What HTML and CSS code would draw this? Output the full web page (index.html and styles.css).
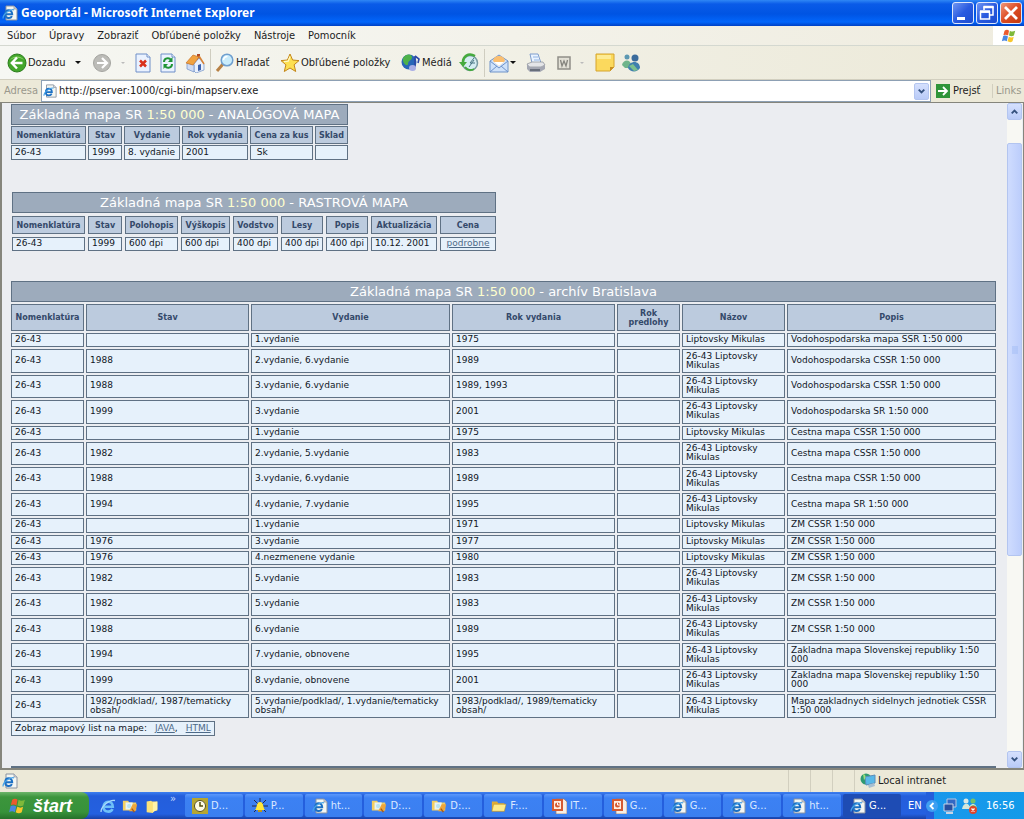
FILE: index.html
```html
<!DOCTYPE html>
<html lang="sk">
<head>
<meta charset="utf-8">
<title>Geoportál</title>
<link rel="stylesheet" href="styles.css">
</head>
<body>
<svg class="sprite" aria-hidden="true">
  <symbol id="ie" viewBox="0 0 16 16"><path d="M4 1h8l3 3v11H4z" fill="#f4f6f2" stroke="#8a93a0"/><path d="M12 1v3h3" fill="#ccd3dc" stroke="#8a93a0" stroke-width=".7"/><path d="M3.500 9.300h6.700c0-5.600-7-5.300-7 0 0 4.700 5.400 4.600 6.700 1.800" fill="none" stroke="#1c70c4" stroke-width="2"/><path d="M1 13.500C1 9 8 3.800 12 4.800" fill="none" stroke="#46a3e8" stroke-width="1.200"/></symbol>
  <symbol id="ebig" viewBox="0 0 16 16"><path d="M4 8.800h8.800c0-7-9.300-6.500-9.300 0 0 6 7.500 6 9 2.200" fill="none" stroke="#6fc1f8" stroke-width="2.600"/><path d="M1 14C1 9 9 1 15 2.500" fill="none" stroke="#a7d9fb" stroke-width="1.300"/></symbol>
  <symbol id="folder" viewBox="0 0 18 16"><path d="M1 3h6l1 2h7v9H1z" fill="#e0ad38"/><path d="M3 6h14l-2 8H1z" fill="#fdeb8c" stroke="#b98a1e" stroke-width=".6"/></symbol>
  <symbol id="note" viewBox="0 0 18 16"><path d="M3 3l5-1 1 1h6v10l-4 1-1 2-7-1z" fill="#fbe27a"/><path d="M10 4l5-1v9l-5 3z" fill="#fff3a8"/></symbol>
  <symbol id="foldersearch" viewBox="0 0 18 16"><path d="M1 2h6l1 2h8v9H1z" fill="#f2cf63"/><path d="M4 4h8v8H4z" fill="#e8f4f6"/><circle cx="8" cy="8" r="3" fill="#b9e4f2" stroke="#ecf5f7"/><path d="M12 6h5l-2 8H8z" fill="#eda63c"/><path d="M11 11l3 4" stroke="#a65a18" stroke-width="1.500"/></symbol>
  <symbol id="ppt" viewBox="0 0 16 16"><path d="M5 1h8l3 3v12H5z" fill="#f8efe4" stroke="#9b7968" stroke-width=".7"/><path d="M1 1h11v12H1z" fill="#d65b32"/><path d="M3 3h7v8H3z" fill="#fff0e2"/><circle cx="6.500" cy="7" r="2.500" fill="#d65b32"/><path d="M6.500 4.500V7H9" stroke="#fff" fill="none"/></symbol>
  <symbol id="flag" viewBox="0 0 18 16"><path d="M4 2c2-1.500 4-1 5 0L8 7.500C6 6 4 6.500 2.700 7z" fill="#ec5a2c"/><path d="M10 2c2 1.500 4 1 6 0l-1.500 5.500C12 8.800 10.500 8 9 7.500z" fill="#7fb93a"/><path d="M2.500 8c2-1 4-.5 5.300.5L6.500 14c-2-1.500-4-1-5.500 0z" fill="#4a86e0"/><path d="M8.800 8.800c2 1 4 1 5.500 0L13 14c-2 1.500-4 1-5.700 0z" fill="#f8c62c"/></symbol>
  <symbol id="page" viewBox="0 0 16 20"><path d="M1 1h11l3 3v15H1z" fill="#eaf2ff" stroke="#6f8fc8"/><path d="M12 1v3h3" fill="#fff" stroke="#6f8fc8"/></symbol>
</svg>

<header class="titlebar">
  <svg class="i16"><use href="#ie"/></svg>
  <h1 class="window-title">Geoportál - Microsoft Internet Explorer</h1>
  <div class="window-buttons">
    <button class="wb" aria-label="Minimalizovať"><svg viewBox="0 0 20 20"><path d="M4 14h8v3H4z" fill="#fff"/></svg></button>
    <button class="wb" aria-label="Obnoviť"><svg viewBox="0 0 20 20"><path d="M7 7V4h9v8h-3M3.500 9h9v7h-9z" fill="none" stroke="#fff" stroke-width="1.500"/><path d="M3 8.500h10M6.500 4h10" stroke="#fff" stroke-width="2.500"/></svg></button>
    <button class="wb wb-close" aria-label="Zavrieť"><svg viewBox="0 0 20 20"><path d="M4 4l12 12M16 4L4 16" stroke="#fff" stroke-width="2.800"/></svg></button>
  </div>
</header>

<nav class="menubar">
  <button>Súbor</button><button>Úpravy</button><button>Zobraziť</button><button>Obľúbené položky</button><button>Nástroje</button><button>Pomocník</button>
  <span class="throbber"><svg class="i16"><use href="#flag"/></svg></span>
</nav>

<div class="toolbar" role="toolbar">
  <button class="tool t-back"><svg class="i20" viewBox="0 0 20 20"><circle cx="10" cy="10" r="9" fill="#43a62b" stroke="#2b7d1c"/><path d="M3 7a8 7 0 0 1 14 0c-4-3-10-3-14 0z" fill="#8fd66e"/><path d="M10 4.500L4.800 10l5.200 5.500M5 10h10.500" fill="none" stroke="#fff" stroke-width="2.400"/></svg>Dozadu<span class="drop"></span></button>
  <button class="tool t-fwd" aria-label="Dopredu"><svg class="i20" viewBox="0 0 20 20"><circle cx="10" cy="10" r="8.500" fill="#bcbcb8" stroke="#a4a4a0"/><path d="M10 5l5 5-5 5M15 10H5" fill="none" stroke="#fff" stroke-width="2.200"/></svg><span class="drop off"></span></button>
  <button class="tool t-icon" aria-label="Zastaviť"><svg class="page" viewBox="0 0 16 20"><use href="#page"/><path d="M5 7.500l6 6m0-6l-6 6" stroke="#d9301c" stroke-width="2.500"/></svg></button>
  <button class="tool t-icon" aria-label="Obnoviť stránku"><svg class="page" viewBox="0 0 16 20"><use href="#page"/><path d="M4 9c0-4 5-5 7-2M12 11c0 4-5 5-7 2" fill="none" stroke="#1f9436" stroke-width="2"/><path d="M12.500 4v5H8zM3.500 16v-5H8z" fill="#1f9436"/></svg></button>
  <button class="tool t-icon" aria-label="Domov"><svg class="i20" viewBox="0 0 20 20"><path d="M12 1h3v6h-3z" fill="#b04a2a"/><path d="M9 11l5-6 5 6v6l-8 3-2-2z" fill="#eaf1fd" stroke="#6e8fc5" stroke-width=".7"/><path d="M2 10l7 2v7l-7-3z" fill="#cfdcf4" stroke="#6e8fc5" stroke-width=".7"/><path d="M1 10l7-8 6 2-6 8z" fill="#f1a340" stroke="#c8742a" stroke-width=".7"/><path d="M14 3l5 8" stroke="#d88234" stroke-width="1.500"/><path d="M13 18v-6l3-1v6z" fill="#3d62ad"/></svg></button>
  <button class="tool t-search sep"><svg class="i20" viewBox="0 0 20 20"><path d="M8 11l-6 7" stroke="#b88246" stroke-width="3"/><circle cx="12" cy="7" r="5.800" fill="#c9ecfb" stroke="#6f9fcf" stroke-width="1.500"/><path d="M8.500 7a4 4 0 0 1 4-3.500" stroke="#fff" stroke-width="1.500" fill="none"/></svg>Hľadať</button>
  <button class="tool t-fav"><svg class="i20" viewBox="0 0 20 20"><path d="M10 1l2.600 6 6.400.6-4.900 4.200 1.600 6.700L10 15l-5.700 3.500 1.600-6.700L1 7.600 7.400 7z" fill="#fde052" stroke="#c4861a"/><path d="M10 3.500L8.200 8.200 4 8.600" stroke="#fffac8" fill="none" stroke-width="1.300"/></svg>Obľúbené položky</button>
  <button class="tool t-media"><svg class="i20" viewBox="0 0 20 20"><circle cx="8" cy="9" r="7.500" fill="#2866b8"/><path d="M2 5c3-5 9-4 9-1 0 4-4 3-4 7 0 3-6 0-5-6z" fill="#4db24a"/><path d="M14 3v11M14 3l4 3-1 4" stroke="#2c48a6" stroke-width="1.600" fill="none"/><ellipse cx="11.500" cy="15" rx="3.500" ry="3" fill="#a9aee6"/></svg>Médiá</button>
  <button class="tool t-icon" aria-label="História"><svg class="i20" viewBox="0 0 20 20"><circle cx="11" cy="10" r="7.500" fill="#d5edf2" stroke="#789aa2" stroke-width="1.500"/><path d="M11 10l4-5M11 10h5M10 14l5-7" stroke="#487583"/><path d="M16 3C9-1 4 4 4 9" fill="none" stroke="#46aa3e" stroke-width="2.500"/><path d="M0 9h8l-4 5z" fill="#46aa3e"/><path d="M6 14c2 3 6 4 9 2" stroke="#46aa3e" stroke-width="2" fill="none"/></svg></button>
  <button class="tool t-mail sep" aria-label="Pošta"><svg class="i20" viewBox="0 0 20 20"><path d="M1 8l9-6 9 6v11H1z" fill="#cfe2fa" stroke="#6f93c9"/><path d="M4 8a6 5 0 0 1 12 0l-6 5z" fill="#fbbf70"/><path d="M5 9h10l-5 4z" fill="#fff"/><path d="M1 8l9 7 9-7M1 19l7-6M19 19l-7-6" fill="none" stroke="#6f93c9"/></svg><span class="drop"></span></button>
  <button class="tool t-print" aria-label="Tlačiť"><svg class="i20" viewBox="0 0 20 20"><path d="M4 1h8l3 9H6z" fill="#e9f3ff" stroke="#7f9dcc"/><path d="M7 4h5M8 7h5" stroke="#92b4e4"/><path d="M1 11l5-2h11l2 3-4 2H3z" fill="#e4e5e8" stroke="#888c94" stroke-width=".7"/><path d="M1 11l3 3h11l4-2v4l-5 3H4l-3-3z" fill="#a4a7b2"/><path d="M4 17h10" stroke="#555b68" stroke-width="1.500"/></svg></button>
  <button class="tool t-word" aria-label="Upraviť"><svg class="i14" viewBox="0 0 14 14"><path d="M1 1h12v12H1z" fill="#e2e0d6" stroke="#908f88" stroke-width="1.500"/><path d="M3.500 4l1.500 6 2-5 2 5 1.500-6" fill="none" stroke="#85847e" stroke-width="1.300"/></svg><span class="drop off"></span></button>
  <button class="tool t-note" aria-label="Diskusia"><svg class="i20" viewBox="0 0 20 20"><path d="M1 1h18v13l-4 4H1z" fill="#fbd95d" stroke="#d5a42e"/><path d="M2 2h14v4H2z" fill="#fdeb94"/><path d="M19 14h-4v4z" fill="#c98f22"/></svg></button>
  <button class="tool t-icon" aria-label="Messenger"><svg class="i20" viewBox="0 0 20 20"><circle cx="6" cy="4" r="2.500" fill="#5c98b2"/><circle cx="14" cy="5" r="3.500" fill="#3b6c9c"/><path d="M1 12c1-6 9-6 9 0l-3 3H4z" fill="#6fb48a"/><path d="M7 15c1-8 12-8 12 0-3 5-10 4-12 0z" fill="#3f7fae"/><path d="M8 13l5 5 4-1-5-6z" fill="#7cc08e"/></svg></button>
</div>

<form class="addressbar">
  <label class="dim" for="url">Adresa</label>
  <div class="urlbox"><svg class="i14"><use href="#ie"/></svg><input id="url" type="text" value="http://pserver:1000/cgi-bin/mapserv.exe"><button type="button" class="sbtn" aria-label="Zoznam adries"><svg viewBox="0 0 14 14"><path d="M4 5l3 3 3-3" fill="none" stroke="#34517e" stroke-width="2"/></svg></button></div>
  <button type="button" class="go"><svg class="i14" viewBox="0 0 14 14"><path d="M0 0h14v14H0z" fill="#2f9439"/><path d="M7 3l4 4-4 4M2 7h8" fill="none" stroke="#fff" stroke-width="1.800"/></svg>Prejsť</button>
  <span class="links dim">Links</span>
</form>

<div class="viewport">
  <main class="document">
    <table class="grid analog">
      <colgroup><col class="c75"><col class="c34"><col class="c56"><col class="c66"><col class="c63"><col></colgroup>
      <tr><th class="caption" colspan="6">Základná mapa SR <em>1:50 000</em> - ANALÓGOVÁ MAPA</th></tr>
      <tr class="head"><th>Nomenklatúra</th><th>Stav</th><th>Vydanie</th><th>Rok vydania</th><th>Cena za kus</th><th>Sklad</th></tr>
      <tr><td>26-43</td><td>1999</td><td>8. vydanie</td><td>2001</td><td>&nbsp;Sk</td><td></td></tr>
    </table>

    <table class="grid raster">
      <colgroup><col class="c73"><col class="c34"><col class="c53"><col class="c49"><col class="c45"><col class="c42"><col class="c42"><col class="c66"><col></colgroup>
      <tr><th class="caption" colspan="9">Základná mapa SR <em>1:50 000</em> - RASTROVÁ MAPA</th></tr>
      <tr class="head"><th>Nomenklatúra</th><th>Stav</th><th>Polohopis</th><th>Výškopis</th><th>Vodstvo</th><th>Lesy</th><th>Popis</th><th>Aktualizácia</th><th>Cena</th></tr>
      <tr><td>26-43</td><td>1999</td><td>600 dpi</td><td>600 dpi</td><td>400 dpi</td><td>400 dpi</td><td>400 dpi</td><td>10.12. 2001</td><td class="mid"><a href="#">podrobne</a></td></tr>
    </table>

    <table class="grid archive">
      <colgroup><col class="c73"><col class="c163"><col class="c199"><col class="c163"><col class="c63"><col class="c103"><col></colgroup>
      <tr><th class="caption" colspan="7">Základná mapa SR <em>1:50 000</em> - archív Bratislava</th></tr>
      <tr class="head"><th>Nomenklatúra</th><th>Stav</th><th>Vydanie</th><th>Rok vydania</th><th>Rok predlohy</th><th>Názov</th><th>Popis</th></tr>
      <tr><td>26-43</td><td></td><td>1.vydanie</td><td>1975</td><td></td><td>Liptovsky Mikulas</td><td>Vodohospodarska mapa SSR 1:50 000</td></tr>
      <tr><td>26-43</td><td>1988</td><td>2.vydanie, 6.vydanie</td><td>1989</td><td></td><td>26-43 Liptovsky Mikulas</td><td>Vodohospodarska CSSR 1:50 000</td></tr>
      <tr><td>26-43</td><td>1988</td><td>3.vydanie, 6.vydanie</td><td>1989, 1993</td><td></td><td>26-43 Liptovsky Mikulas</td><td>Vodohospodarska CSSR 1:50 000</td></tr>
      <tr><td>26-43</td><td>1999</td><td>3.vydanie</td><td>2001</td><td></td><td>26-43 Liptovsky Mikulas</td><td>Vodohospodarska SR 1:50 000</td></tr>
      <tr><td>26-43</td><td></td><td>1.vydanie</td><td>1975</td><td></td><td>Liptovsky Mikulas</td><td>Cestna mapa CSSR 1:50 000</td></tr>
      <tr><td>26-43</td><td>1982</td><td>2.vydanie, 5.vydanie</td><td>1983</td><td></td><td>26-43 Liptovsky Mikulas</td><td>Cestna mapa CSSR 1:50 000</td></tr>
      <tr><td>26-43</td><td>1988</td><td>3.vydanie, 6.vydanie</td><td>1989</td><td></td><td>26-43 Liptovsky Mikulas</td><td>Cestna mapa CSSR 1:50 000</td></tr>
      <tr><td>26-43</td><td>1994</td><td>4.vydanie, 7.vydanie</td><td>1995</td><td></td><td>26-43 Liptovsky Mikulas</td><td>Cestna mapa SR 1:50 000</td></tr>
      <tr><td>26-43</td><td></td><td>1.vydanie</td><td>1971</td><td></td><td>Liptovsky Mikulas</td><td>ZM CSSR 1:50 000</td></tr>
      <tr><td>26-43</td><td>1976</td><td>3.vydanie</td><td>1977</td><td></td><td>Liptovsky Mikulas</td><td>ZM CSSR 1:50 000</td></tr>
      <tr><td>26-43</td><td>1976</td><td>4.nezmenene vydanie</td><td>1980</td><td></td><td>Liptovsky Mikulas</td><td>ZM CSSR 1:50 000</td></tr>
      <tr><td>26-43</td><td>1982</td><td>5.vydanie</td><td>1983</td><td></td><td>26-43 Liptovsky Mikulas</td><td>ZM CSSR 1:50 000</td></tr>
      <tr><td>26-43</td><td>1982</td><td>5.vydanie</td><td>1983</td><td></td><td>26-43 Liptovsky Mikulas</td><td>ZM CSSR 1:50 000</td></tr>
      <tr><td>26-43</td><td>1988</td><td>6.vydanie</td><td>1989</td><td></td><td>26-43 Liptovsky Mikulas</td><td>ZM CSSR 1:50 000</td></tr>
      <tr><td>26-43</td><td>1994</td><td>7.vydanie, obnovene</td><td>1995</td><td></td><td>26-43 Liptovsky Mikulas</td><td>Zakladna mapa Slovenskej republiky 1:50 000</td></tr>
      <tr><td>26-43</td><td>1999</td><td>8.vydanie, obnovene</td><td>2001</td><td></td><td>26-43 Liptovsky Mikulas</td><td>Zakladna mapa Slovenskej republiky 1:50 000</td></tr>
      <tr><td>26-43</td><td>1982/podklad/, 1987/tematicky obsah/</td><td>5.vydanie/podklad/, 1.vydanie/tematicky obsah/</td><td>1983/podklad/, 1989/tematicky obsah/</td><td></td><td>26-43 Liptovsky Mikulas</td><td>Mapa zakladnych sidelnych jednotiek CSSR 1:50 000</td></tr>
    </table>

    <p class="showmap"><span>Zobraz mapový list na mape:</span><span><a href="#">JAVA</a>,</span><a href="#">HTML</a></p>
    <hr class="rule">
  </main>
  <div class="scrollbar">
    <button class="sbtn" aria-label="Nahor"><svg viewBox="0 0 14 14"><path d="M4 9l3-3 3 3" fill="none" stroke="#34517e" stroke-width="2"/></svg></button>
    <div class="track"><div class="thumb"><svg viewBox="0 0 6 8"><path d="M0 1h6M0 3h6M0 5h6M0 7h6" stroke="#a3bdf5"/></svg></div></div>
    <button class="sbtn" aria-label="Nadol"><svg viewBox="0 0 14 14"><path d="M4 5l3 3 3-3" fill="none" stroke="#34517e" stroke-width="2"/></svg></button>
  </div>
</div>

<div class="statusbar">
  <span class="st-main"><svg class="i16"><use href="#ie"/></svg></span><span class="st-cell"></span><span class="st-cell"></span><span class="st-cell"></span>
  <span class="st-zone"><svg class="i16" viewBox="0 0 16 16"><circle cx="6" cy="6" r="5.500" fill="#2e9a72"/><path d="M5 4l10-2v8L6 12z" fill="#58b8e8" stroke="#5d8db8"/><path d="M3 1c3 0 3 4 1 6z" fill="#9ee07a"/><path d="M8 12l6-2 1 3-6 2z" fill="#a7bfd2"/></svg>Local intranet</span>
</div>

<footer class="taskbar">
  <button class="start"><svg class="flag"><use href="#flag"/></svg>štart</button>
  <div class="quick">
    <button aria-label="Internet Explorer"><svg class="i16"><use href="#ebig"/></svg></button>
    <button aria-label="Prieskumník"><svg class="i16"><use href="#foldersearch"/></svg></button>
    <button aria-label="Priečinok"><svg class="i16"><use href="#note"/></svg></button>
    <span class="more">»</span>
  </div>
  <div class="tasks">
    <button class="task"><svg class="i16" viewBox="0 0 16 16"><path d="M0 0h16v16H0z" fill="#b5a632"/><circle cx="8" cy="8" r="5" fill="#fffce0" stroke="#fff" stroke-width="1.500"/><circle cx="8" cy="8" r="5.500" fill="none" stroke="#544c12"/><path d="M8 4v4h3" fill="none" stroke="#544c12" stroke-width="1.500"/></svg>D...</button>
    <button class="task"><svg class="i16" viewBox="0 0 16 16"><path d="M2 2l4 4M14 2l-4 4M0 8h16M2 14l4-4M14 14l-4-4M8 0v4" stroke="#222848"/><path d="M3 12c2-1 1-8 5-8s3 7 5 8z" fill="#ffe73a"/><path d="M6 13h4" stroke="#c49a10" stroke-width="2"/></svg>P...</button>
    <button class="task"><svg class="i16"><use href="#ie"/></svg>ht...</button>
    <button class="task"><svg class="i16"><use href="#foldersearch"/></svg>D:...</button>
    <button class="task"><svg class="i16"><use href="#foldersearch"/></svg>D:...</button>
    <button class="task"><svg class="i16"><use href="#folder"/></svg>F:...</button>
    <button class="task"><svg class="i16"><use href="#ppt"/></svg>IT...</button>
    <button class="task"><svg class="i16"><use href="#ppt"/></svg>G...</button>
    <button class="task"><svg class="i16"><use href="#ie"/></svg>G...</button>
    <button class="task"><svg class="i16"><use href="#ie"/></svg>G...</button>
    <button class="task"><svg class="i16"><use href="#ie"/></svg>ht...</button>
    <button class="task active"><svg class="i16"><use href="#ie"/></svg>G...</button>
  </div>
  <span class="lang">EN</span>
  <div class="tray">
    <button class="collapse" aria-label="Skryť ikony"><svg viewBox="0 0 12 12"><circle cx="6" cy="6" r="6" fill="#3f9ff2"/><path d="M7.500 3L4.500 6l3 3" fill="none" stroke="#fff" stroke-width="1.800"/></svg></button>
    <svg class="i16" viewBox="0 0 16 16"><path d="M5 1h9v8H5z" fill="#3268c4" stroke="#b8c7e2"/><path d="M2 6h9v7H2z" fill="#284f9e" stroke="#c8d4e6"/><path d="M4 15h7" stroke="#c8d4e6" stroke-width="2"/></svg>
    <svg class="i16" viewBox="0 0 16 16"><circle cx="4" cy="3" r="2.500" fill="#dce9e4"/><circle cx="11" cy="3" r="2.500" fill="#73c16c"/><path d="M0 11c1-7 8-7 8 0zM7 12c0-8 8-8 8 0z" fill="#d4e8dc"/><path d="M8 11c0-5 6-5 7 0z" fill="#5eb259"/><circle cx="11" cy="12" r="4" fill="#e0442a"/><path d="M9.500 10.500l3 3m0-3l-3 3" stroke="#fff" stroke-width="1.300"/></svg>
    <time>16:56</time>
  </div>
</footer>
</body>
</html>
```

FILE: styles.css
```css
* { box-sizing: border-box; }
body {
  margin: 0;
  height: 100vh;
  display: flex;
  flex-direction: column;
  overflow: hidden;
  background: #ece9d8;
  color: #1c1c1c;
  font: 11px/14px "DejaVu Sans Condensed", "DejaVu Sans", sans-serif;
}
button { margin: 0; padding: 0; border: 0; background: none; color: inherit; font: inherit; }
svg { flex: none; display: block; }
.sprite { display: none; }
.i14 { width: 14px; height: 14px; }
.i16 { width: 16px; height: 16px; }
.i20 { width: 20px; height: 20px; }
.page { width: 16px; height: 20px; }
.dim { color: #9a988c; }

/* Title bar */
.titlebar {
  flex: none;
  height: 26px;
  display: flex;
  align-items: center;
  gap: 3px;
  padding-left: 2px;
  background: linear-gradient(#2f87f5, #0a5be8 4px, #0054e3 14px, #0266fb 22px, #0040c4);
}
.window-title { flex: 1; margin: 0; color: #fff; font: bold 12px/16px "Noto Sans", sans-serif; }
.window-buttons { display: flex; gap: 2px; padding-right: 2px; }
.wb { width: 22px; height: 22px; border: 1px solid #dfe8fb; border-radius: 3px; background: linear-gradient(135deg, #6f95f2, #2a5be0 50%, #1c4cd0); }
.wb-close { background: linear-gradient(135deg, #f0977a, #dc4b22 50%, #c23a12); }

/* Menu */
.menubar {
  flex: none;
  height: 20px;
  display: flex;
  align-items: center;
  gap: 13px;
  padding-left: 7px;
  border-bottom: 1px solid #d4d8d0;
  background: linear-gradient(90deg, #f7f8f5, #efecdf);
}
.throbber { align-self: stretch; margin-left: auto; width: 31px; display: flex; align-items: center; justify-content: center; background: #fff; }

/* Toolbar */
.toolbar { flex: none; height: 34px; display: flex; align-items: center; border-bottom: 1px solid #d2cfbf; background: linear-gradient(90deg, #f6f7f3, #ece9d8); }
.tool { height: 28px; display: flex; align-items: center; gap: 1px; white-space: nowrap; }
.sep { border-left: 1px solid #cfcdc0; padding-left: 4px; }
.t-back { width: 92px; padding-left: 7px; }
.t-fwd { width: 43px; }
.t-icon { width: 25px; }
.t-search { width: 70px; }
.t-fav { width: 121px; }
.t-media { width: 58px; }
.t-mail { width: 42px; }
.t-print { width: 31px; }
.t-word { width: 38px; }
.t-note { width: 26px; }
.drop { width: 0; border: 3px solid transparent; border-top-color: #111; border-bottom: 0; }
.t-back .drop, .t-fwd .drop, .t-word .drop { margin-left: 8px; }
.drop.off { border-width: 2px; border-top-color: #bbb; border-bottom: 0; }

/* Address */
.addressbar { flex: none; height: 22px; display: flex; align-items: stretch; margin: 0; padding-left: 4px; background: #ece9d8; }
.addressbar label { width: 37px; align-self: center; }
.urlbox { flex: 1; display: flex; align-items: center; gap: 2px; padding: 0 1px; border: 1px solid #8da0b4; background: #fff; }
.urlbox input { flex: 1; min-width: 0; padding: 0; border: 0; outline: 0; background: none; color: #1c1c1c; font: inherit; }
.sbtn { flex: none; width: 15px; height: 17px; border: 1px solid #b3c5f0; border-radius: 2px; background: linear-gradient(#d5e0fd, #b9cbf8); }
.go { width: 61px; display: flex; align-items: center; gap: 3px; padding-left: 5px; }
.links { width: 32px; align-self: center; padding-left: 3px; border-left: 1px solid #d2cfbf; }

/* Page area */
.viewport { flex: 1; min-height: 0; display: flex; border: 1px solid #85857c; border-width: 1px 1px 2px 2px; background: #ebedf1; }
.document {
  flex: 1;
  min-width: 0;
  overflow: hidden;
  padding: 0 11px 0 9px;
  color: #10161e;
  font: 9px/9px "DejaVu Sans", sans-serif;
}
.scrollbar { width: 15px; display: flex; flex-direction: column; margin-right: 1px; background: #f8f8f3; }
.track { flex: 1; padding-top: 23px; }
.thumb { height: 68%; display: flex; align-items: center; justify-content: center; border: 1px solid #b3c5f0; border-radius: 2px; background: linear-gradient(90deg, #cfdcfe, #bccdfb); }
.thumb svg { width: 6px; height: 8px; }

.grid { table-layout: fixed; border-collapse: separate; border-spacing: 2px; }
.grid th, .grid td { border: 1px solid #5f7184; text-align: left; }
.grid td { padding: 1px 3px 2px; background: #e6f1fb; }
.grid .mid { text-align: center; }
.grid .head th { height: 18px; padding: 1px 0; background: #bccbde; color: #34496a; font-size: 8px; text-align: center; }
.grid .caption { height: 21px; padding: 0; background: #9dabbc; color: #fff; font: 13px/17px "DejaVu Sans", sans-serif; text-align: center; white-space: nowrap; }
.caption em { color: #ffffce; font-style: normal; }
.grid a, .showmap a { color: #4d6a88; }
.analog { width: 341px; margin: 0 -2px; border-spacing: 2px 1px; }
.raster { width: 490px; margin: 28px -2px 0; border-spacing: 3px; }
.analog td, .raster td { height: 15px; white-space: nowrap; }
.raster td { height: 14px; }
.archive { width: calc(100% + 4px); height: 441px; margin: 25px -2px 0; }
.archive .head th { height: 27px; padding: 1px 8px; }
.archive .head th:first-child { padding: 1px 0; }
.c34 { width: 34px; }
.c42 { width: 42px; }
.c45 { width: 45px; }
.c49 { width: 49px; }
.c53 { width: 53px; }
.c56 { width: 56px; }
.c63 { width: 63px; }
.c66 { width: 66px; }
.c73 { width: 73px; }
.c75 { width: 75px; }
.c103 { width: 103px; }
.c163 { width: 163px; }
.c199 { width: 199px; }
.showmap { width: max-content; display: flex; gap: 8px; margin: 1px 0 30px; padding: 2px 3px; border: 1px solid #5f7184; background: #e6f1fb; }
.rule { margin: 0; border: 0; border-top: 2px solid #5f7184; }

/* Status */
.statusbar { flex: none; height: 22px; display: flex; background: #ece9d8; }
.statusbar > span { display: flex; align-items: center; }
.st-main { flex: 1; padding-left: 2px; }
.st-cell { width: 22px; border-left: 1px solid #d2cfbf; }
.st-zone { width: 170px; gap: 2px; padding-left: 5px; border-left: 1px solid #d2cfbf; }

/* Taskbar */
.taskbar { flex: none; height: 27px; display: flex; background: linear-gradient(#3d80f0, #245edb 4px, #2460e0 22px, #1941a5); color: #fff; }
.start {
  width: 89px;
  display: flex;
  align-items: center;
  gap: 6px;
  padding-left: 8px;
  border-radius: 0 8px 8px 0;
  background: linear-gradient(#6db56a, #3c953c 5px, #37923a 20px, #26702a);
  font: italic bold 18px/20px "Liberation Sans", sans-serif;
}
.flag { width: 19px; height: 18px; }
.quick { width: 96px; display: flex; align-items: center; gap: 6px; padding-left: 11px; }
.more { align-self: flex-start; margin-left: 4px; color: #c6dbff; }
.tasks { flex: 1; min-width: 0; display: flex; gap: 2px; padding: 2px 0; }
.task { flex: 1; min-width: 0; display: flex; align-items: center; gap: 3px; padding-left: 7px; border-radius: 2px; background: linear-gradient(#5b97fb, #3c81f3 4px, #3b7ff0); color: #dce9ff; }
.task.active { background: #1e4cb4; color: #fff; }
.lang { width: 25px; align-self: center; padding-left: 7px; }
.tray { width: 98px; display: flex; align-items: center; gap: 4px; background: linear-gradient(90deg, #245edb 8px, #1a98ec 8px, #139ae9); }
.collapse svg { width: 12px; height: 12px; }
.tray time { margin-left: 4px; }
```
